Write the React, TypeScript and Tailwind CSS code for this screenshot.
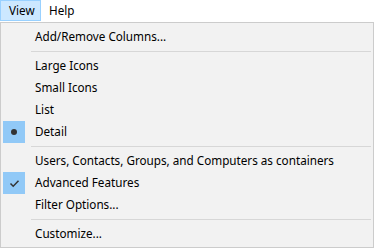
import React from "react";

type Item =
  | { type: "item"; label: string; mark?: "dot" | "check" }
  | { type: "sep" };

const items: Item[] = [
  { type: "item", label: "Add/Remove Columns..." },
  { type: "sep" },
  { type: "item", label: "Large Icons" },
  { type: "item", label: "Small Icons" },
  { type: "item", label: "List" },
  { type: "item", label: "Detail", mark: "dot" },
  { type: "sep" },
  { type: "item", label: "Users, Contacts, Groups, and Computers as containers" },
  { type: "item", label: "Advanced Features", mark: "check" },
  { type: "item", label: "Filter Options..." },
  { type: "sep" },
  { type: "item", label: "Customize..." },
];

export default function App() {
  return (
    <div
      className="w-[374px] h-[248px] bg-white overflow-hidden text-[11.7px] text-black"
      style={{ fontFamily: '"Noto Sans", "Open Sans", sans-serif' }}
    >
      <div className="flex h-[22px] items-stretch">
        <div className="flex items-center w-[41px] h-[21px] pl-[8px] bg-[#cce8ff] border border-[#99d1ff]">
          View
        </div>
        <div className="flex items-center h-[21px] pl-[8px] pr-[8px]">Help</div>
      </div>
      <div className="w-[374px] h-[226px] bg-[#f2f2f2] border border-[#cccccc] pt-[3px] pb-[2px] px-[2px] flex flex-col">
        {items.map((it, i) =>
          it.type === "sep" ? (
            <div key={i} className="h-[7px] flex items-center pl-[28px]">
              <div className="h-px w-full bg-[#d7d7d7]" />
            </div>
          ) : (
            <div key={i} className="h-[22px] flex items-center">
              <div
                className={
                  "w-[22px] h-[22px] flex items-center justify-center " +
                  (it.mark ? "bg-[#91c9f7]" : "")
                }
              >
                {it.mark === "dot" && (
                  <div className="w-[6px] h-[6px] rounded-full bg-[#333333]" />
                )}
                {it.mark === "check" && (
                  <svg width="11" height="9" viewBox="0 0 11 9">
                    <path
                      d="M1.5 4.5 L4.2 7.2 L9.5 1.8"
                      fill="none"
                      stroke="#333333"
                      strokeWidth="1.5"
                    />
                  </svg>
                )}
              </div>
              <div className="pl-[10px] leading-none">{it.label}</div>
            </div>
          )
        )}
      </div>
    </div>
  );
}
